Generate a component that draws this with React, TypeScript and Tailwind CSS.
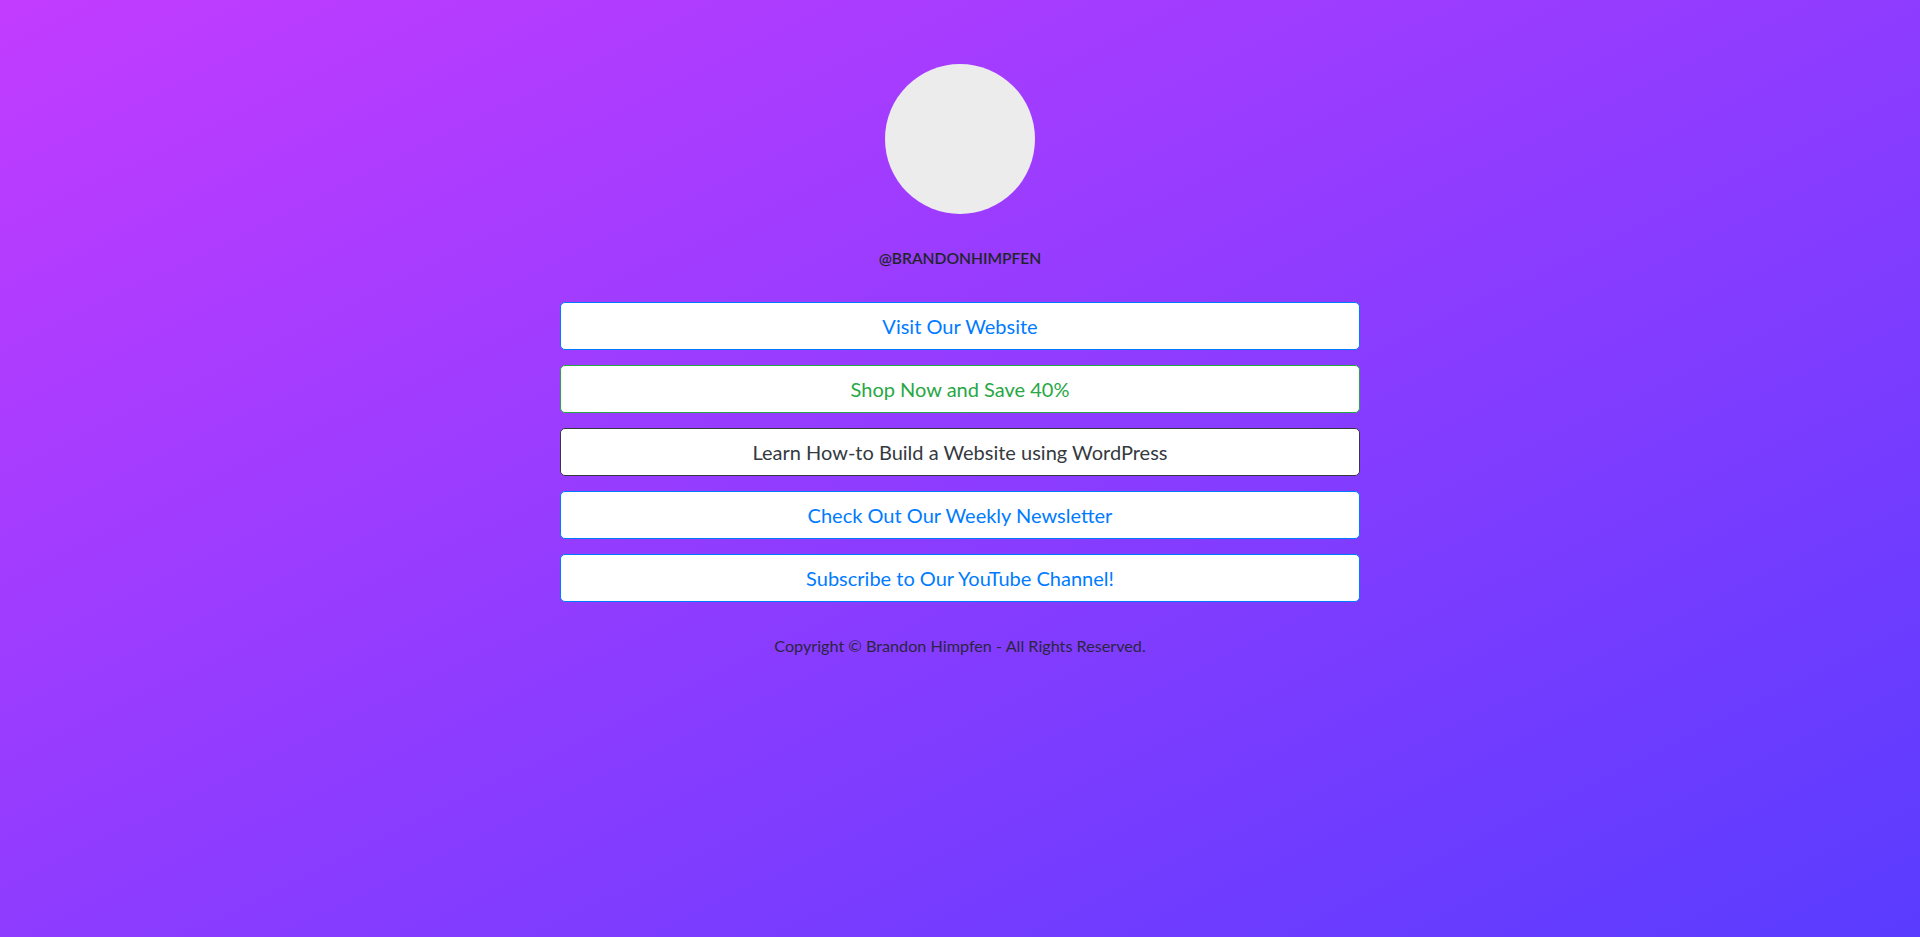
const links = [
  { label: "Visit Our Website", tone: "border-[#007bff] text-[#007bff]" },
  { label: "Shop Now and Save 40%", tone: "border-[#28a745] text-[#28a745]" },
  { label: "Learn How-to Build a Website using WordPress", tone: "border-[#343a40] text-[#343a40]" },
  { label: "Check Out Our Weekly Newsletter", tone: "border-[#007bff] text-[#007bff]" },
  { label: "Subscribe to Our YouTube Channel!", tone: "border-[#007bff] text-[#007bff]" }
];

export default function App() {
  return (
    <main className="min-h-[937px] bg-[linear-gradient(to_bottom_right,#c23cff,#5a3cff)] font-['Lato',sans-serif] text-[#212529]">
      <div className="mx-auto flex w-[800px] flex-col items-center pt-[64px]">
        <div className="h-[150px] w-[150px] rounded-full bg-[#ececec]" />
        <p className="mt-[32px] text-[15.6px] font-semibold leading-6 uppercase">@brandonhimpfen</p>

        <div className="mt-[32px] flex w-full flex-col gap-[15px]">
          {links.map((link) => (
            <a
              key={link.label}
              href="#"
              className={`block h-[48px] w-full rounded-[5px] border bg-white text-center text-[20px] leading-[46px] ${link.tone}`}
            >
              {link.label}
            </a>
          ))}
        </div>

        <p className="mt-[32px] text-[16.2px] leading-6 text-[#2b2540]">
          Copyright © Brandon Himpfen - All Rights Reserved.
        </p>
      </div>
    </main>
  );
}
